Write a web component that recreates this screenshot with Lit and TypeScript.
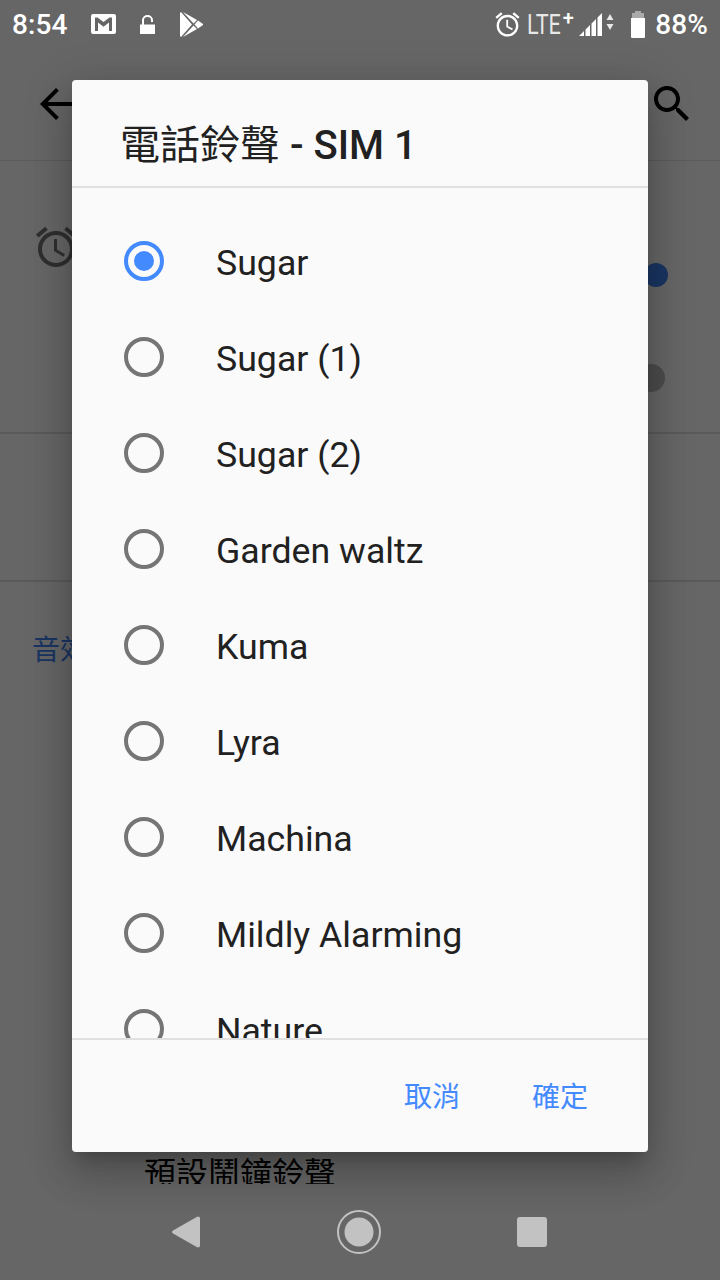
import { LitElement, html, css, svg } from "lit";
import { customElement } from "lit/decorators.js";

const SANS = css`Roboto, "Noto Sans CJK TC", sans-serif`;
const ALARM = svg`<path d="M22 5.72l-4.6-3.86-1.29 1.53 4.6 3.86L22 5.72zM7.88 3.39L6.6 1.86 2 5.71l1.29 1.53 4.59-3.85zM12.5 8H11v6l4.75 2.85.75-1.23-4-2.37V8zM12 4c-4.97 0-9 4.03-9 9s4.03 9 9 9 9-4.03 9-9-4.03-9-9-9zm0 16c-3.87 0-7-3.13-7-7s3.13-7 7-7 7 3.13 7 7-3.13 7-7 7z"/>`;

const TONES = ["Sugar", "Sugar (1)", "Sugar (2)", "Garden waltz", "Kuma", "Lyra", "Machina", "Mildly Alarming", "Nature"];

@customElement("app-root")
export class AppRoot extends LitElement {
  static styles = css`
    :host { display: block; width: 720px; height: 1280px; font-family: ${SANS}; }
    .screen { position: relative; width: 720px; height: 1280px; overflow: hidden; background: #fff; display: flex; flex-direction: column; color: #000; }
    .scrim { position: absolute; inset: 0; background: rgba(0,0,0,.6); z-index: 1; }

    .status { height: 48px; flex: none; display: flex; align-items: center; color: #fff; position: relative; z-index: 2; padding: 1px 12px 0 12px; box-sizing: border-box; }
    .status svg { display: block; flex: none; fill: #fff; margin-bottom: 1px; }
    .time, .pct { font-size: 28px; font-weight: 500; line-height: 48px; letter-spacing: .1px; }
    .time { width: 79px; }
    .lock { margin-left: 24px; }
    .play { margin-left: 25px; }
    .spacer { flex: 1; }
    .lte { font-size: 27px; font-weight: 400; color: #e8e8e8; margin-left: 5px; width: 46px; line-height: 48px; white-space: nowrap; display: flex; align-items: flex-start; }
    .lte-main { display: block; transform: scaleX(.8); transform-origin: left center; width: 36px; }
    .plus { display: block; font-size: 20px; font-weight: 500; line-height: 34px; color: #fff; margin-left: -.5px; }
    .signal { margin-left: 6px; }
    .batt { margin-left: 16px; }
    .pct { margin-left: 9px; }

    .bar { height: 113px; flex: none; box-sizing: border-box; border-bottom: 1px solid #e4e4e4; display: flex; justify-content: space-between; align-items: center; padding: 0 24px 0 32px; }
    .bar svg { display: block; width: 48px; height: 48px; fill: #000; }

    .sec1 { height: 273px; flex: none; box-sizing: border-box; border-bottom: 2px solid #e0e0e0; display: flex; justify-content: space-between; padding: 62px 52px 0 32px; }
    .sec1 > svg { width: 48px; height: 48px; fill: #757575; display: block; }
    .thumbs { display: flex; flex-direction: column; align-items: flex-end; padding-top: 40px; }
    .t1 { width: 24px; height: 24px; border-radius: 50%; background: #4285f4; }
    .t2 { width: 28px; height: 28px; border-radius: 50%; background: #bdbdbd; margin-top: 77px; margin-right: 3px; }

    .sec2 { height: 148px; flex: none; box-sizing: border-box; border-bottom: 2px solid #e0e0e0; }
    .rest { flex: 1; min-height: 0; overflow: hidden; }
    .cat { font-size: 28px; color: #4285f4; padding: 49px 0 0 32px; line-height: 40px; }
    .pref { font-size: 32px; line-height: 44px; padding-left: 144px; margin-top: 481px; color: #000; white-space: nowrap; }

    .nav { height: 96px; flex: none; background: #666; position: relative; z-index: 2; display: flex; align-items: center; padding-left: 172px; box-sizing: border-box; }
    .nav svg { display: block; flex: none; fill: #c2c2c2; }
    .home { margin-left: 137px; }
    .recent { margin-left: 136px; width: 30px; height: 30px; border-radius: 3px; background: #c2c2c2; flex: none; }

    .dialog { position: absolute; left: 72px; top: 80px; width: 576px; height: 1072px; z-index: 3; background: #fafafa; border-radius: 4px; display: flex; flex-direction: column; overflow: hidden; }
    .shadow { position: absolute; left: 72px; top: 80px; width: 576px; height: 1072px; z-index: 2; border-radius: 4px; box-shadow: 0 24px 38px 3px rgba(0,0,0,.14), 0 9px 46px 8px rgba(0,0,0,.12), 0 11px 15px -7px rgba(0,0,0,.2); }
    .title { flex: none; height: 106px; box-sizing: border-box; padding: 41px 0 0 48px; font-size: 40px; line-height: 50px; color: #212121; white-space: nowrap; }
    .title b { font-weight: 500; }
    .list { flex: 1; min-height: 0; overflow: hidden; border-top: 2px solid #e0e0e0; border-bottom: 2px solid #e0e0e0; padding: 25px 0 0 52px; }
    .row { height: 96px; display: flex; align-items: center; gap: 52px; font-size: 35.7px; color: #212121; }
    .row span:last-child { padding-top: 3px; }
    .radio { width: 40px; height: 40px; box-sizing: border-box; border-radius: 50%; border: 4px solid #757575; flex: none; display: flex; align-items: center; justify-content: center; }
    .radio.on { border-color: #448aff; }
    .radio.on::after { content: ""; width: 20px; height: 20px; border-radius: 50%; background: #448aff; }
    .foot { flex: none; height: 112px; box-sizing: border-box; display: flex; justify-content: flex-end; align-items: center; gap: 72px; padding: 0 60px 2px 0; font-size: 28px; color: #448aff; }
  `;

  render() {
    return html`<div class="screen">
      <div class="status">
        <span class="time">8:54</span>
        <svg width="25" height="20" viewBox="0 0 25 20"><path fill-rule="evenodd" d="M2 0h21a2 2 0 0 1 2 2v16a2 2 0 0 1-2 2H2a2 2 0 0 1-2-2V2a2 2 0 0 1 2-2zM4 3.500V17h3V8.500l5.500 4.200L18 8.500V17h3V3.500h-2.500l-6 4.600-6-4.600z"/></svg>
        <svg class="lock" width="15" height="19" viewBox="0 0 15 19"><path d="M0 9.500h15V19H0z"/><path fill="none" stroke="#fff" stroke-width="2" d="M3 10V5a4.500 4 0 0 1 9 0v2"/></svg>
        <svg class="play" width="23" height="25" viewBox="0 0 23 25"><path d="M0 1 1 0l11 12.500L1 25l-1-1zM3 0l14 8-3.500 3.500zM18 8.500l5 3.500v1l-5 3.500-3.500-4zM3 25l14-8-3.500-3.500z"/></svg>
        <span class="spacer"></span>
        <svg width="29" height="29" viewBox="0 0 24 24">${ALARM}</svg>
        <span class="lte"><span class="lte-main">LTE</span><span class="plus">+</span></span>
        <svg class="signal" width="35" height="23" viewBox="0 0 35 23"><path d="M0 23 5 18v5zM6.500 16.500 11 12v11H6.500zM12.500 10.500 17 6v17h-4.500zM18.500 4.500 23 0v23h-4.500z"/><path d="M31 1l3.500 6h-7zM31 17l3.500-6h-7z" fill="#e8e8e8"/></svg>
        <svg class="batt" width="16" height="27" viewBox="0 0 16 27"><path d="M5 0h6v2h3v5H2V2h3z" fill="#aaa"/><path d="M1 7h14v19a1 1 0 0 1-1 1H2a1 1 0 0 1-1-1z"/></svg>
        <span class="pct">88%</span>
      </div>

      <div class="bar">
        <svg viewBox="0 0 24 24"><path d="M20 11H7.830l5.590-5.590L12 4l-8 8 8 8 1.410-1.410L7.830 13H20v-2z"/></svg>
        <svg viewBox="0 0 24 24"><path d="M15.500 14h-.79l-.28-.27C15.410 12.590 16 11.110 16 9.500 16 5.910 13.090 3 9.500 3S3 5.910 3 9.500 5.910 16 9.500 16c1.610 0 3.090-.59 4.230-1.570l.27.28v.79l5 4.990L20.490 19l-4.990-5zm-6 0C7.010 14 5 11.990 5 9.500S7.010 5 9.500 5 14 7.010 14 9.500 11.990 14 9.500 14z"/></svg>
      </div>

      <div class="sec1">
        <svg viewBox="0 0 24 24">${ALARM}</svg>
        <div class="thumbs"><div class="t1"></div><div class="t2"></div></div>
      </div>
      <div class="sec2"></div>
      <div class="rest">
        <div class="cat">音效</div>
        <div class="pref">預設鬧鐘鈴聲</div>
      </div>

      <div class="nav">
        <svg width="28" height="32" viewBox="0 0 28 32"><path d="M26 0.500c1 0 2 .7 2 2v27c0 1.300-1 2-2 2-.5 0-1-.2-1.300-.5L1 17.500c-1.300-.8-1.300-2.200 0-3L24.700 1c.3-.3.800-.5 1.300-.5z"/></svg>
        <svg class="home" width="44" height="44" viewBox="0 0 44 44"><circle cx="22" cy="22" r="21" fill="none" stroke="#c2c2c2" stroke-width="2"/><circle cx="22" cy="22" r="14.500"/></svg>
        <div class="recent"></div>
      </div>

      <div class="scrim"></div>
      <div class="shadow"></div>
      <div class="dialog">
        <div class="title">電話鈴聲 <b>- SIM 1</b></div>
        <div class="list">
          ${TONES.map((t, i) => html`<div class="row"><span class="radio ${i === 0 ? "on" : ""}"></span><span>${t}</span></div>`)}
        </div>
        <div class="foot"><span>取消</span><span>確定</span></div>
      </div>
    </div>`;
  }
}
